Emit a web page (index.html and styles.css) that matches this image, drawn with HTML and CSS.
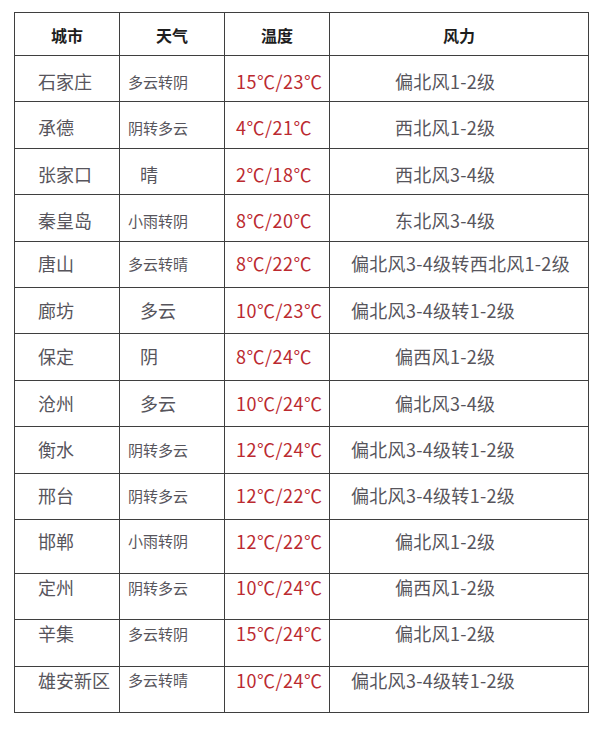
FILE: index.html
```html
<!DOCTYPE html>
<html lang="zh-CN">
<head>
<meta charset="utf-8">
<title>河北天气</title>
<link rel="stylesheet" href="styles.css">
</head>
<body>
<table class="wx">
  <colgroup>
    <col class="c-city"><col class="c-sky"><col class="c-temp"><col class="c-wind">
  </colgroup>
  <thead>
    <tr class="head"><th>城市</th><th>天气</th><th>温度</th><th>风力</th></tr>
  </thead>
  <tbody>
    <tr class="down"><td class="city">石家庄</td><td class="sky">多云转阴</td><td class="temp">15℃/23℃</td><td class="wind ind">偏北风1-2级</td></tr>
    <tr class="down"><td class="city">承德</td><td class="sky">阴转多云</td><td class="temp">4℃/21℃</td><td class="wind ind">西北风1-2级</td></tr>
    <tr class="down"><td class="city">张家口</td><td class="sky big">晴</td><td class="temp">2℃/18℃</td><td class="wind ind">西北风3-4级</td></tr>
    <tr class="down"><td class="city">秦皇岛</td><td class="sky">小雨转阴</td><td class="temp">8℃/20℃</td><td class="wind ind">东北风3-4级</td></tr>
    <tr><td class="city">唐山</td><td class="sky">多云转晴</td><td class="temp">8℃/22℃</td><td class="wind">偏北风3-4级转西北风1-2级</td></tr>
    <tr><td class="city">廊坊</td><td class="sky big">多云</td><td class="temp">10℃/23℃</td><td class="wind">偏北风3-4级转1-2级</td></tr>
    <tr><td class="city">保定</td><td class="sky big">阴</td><td class="temp">8℃/24℃</td><td class="wind ind">偏西风1-2级</td></tr>
    <tr><td class="city">沧州</td><td class="sky big">多云</td><td class="temp">10℃/24℃</td><td class="wind ind">偏北风3-4级</td></tr>
    <tr><td class="city">衡水</td><td class="sky">阴转多云</td><td class="temp">12℃/24℃</td><td class="wind">偏北风3-4级转1-2级</td></tr>
    <tr><td class="city">邢台</td><td class="sky">阴转多云</td><td class="temp">12℃/22℃</td><td class="wind">偏北风3-4级转1-2级</td></tr>
    <tr class="tall"><td class="city">邯郸</td><td class="sky">小雨转阴</td><td class="temp">12℃/22℃</td><td class="wind ind">偏北风1-2级</td></tr>
    <tr class="up"><td class="city">定州</td><td class="sky">阴转多云</td><td class="temp">10℃/24℃</td><td class="wind ind">偏西风1-2级</td></tr>
    <tr class="up"><td class="city">辛集</td><td class="sky">多云转阴</td><td class="temp">15℃/24℃</td><td class="wind ind">偏北风1-2级</td></tr>
    <tr class="up"><td class="city">雄安新区</td><td class="sky">多云转晴</td><td class="temp">10℃/24℃</td><td class="wind">偏北风3-4级转1-2级</td></tr>
  </tbody>
</table>
</body>
</html>
```

FILE: styles.css
```css
html, body {
  margin: 0;
  padding: 0;
  background: #ffffff;
}

body {
  padding: 12px 0 0 14px;
  font-family: "Noto Sans CJK SC", "Noto Sans", sans-serif;
  color: #57555c;
}

.wx {
  border-collapse: collapse;
  table-layout: fixed;
  width: 574px;
}

.c-city, .c-sky, .c-temp { width: 105px; }
.c-wind { width: 259px; }

.wx th, .wx td {
  box-sizing: border-box;
  border: 1px solid #3f3f3f;
  padding: 0;
  vertical-align: middle;
  white-space: nowrap;
  overflow: hidden;
  line-height: 1.2;
}

.head th {
  height: 43px;
  font-size: 16px;
  font-weight: 700;
  color: #1e1e1e;
  text-align: center;
  padding-top: 4px;
}

.wx tbody td {
  height: 46.4px;
  text-align: left;
}

.wx tbody tr.tall td {
  height: 54px;
  padding-bottom: 10px;
}

.wx tbody tr.up td {
  padding-bottom: 18px;
}

.wx tbody tr.down td {
  padding-top: 6px;
}

.city {
  font-size: 18px;
  padding-left: 23px !important;
}

.sky {
  font-size: 15px;
  padding-left: 8px !important;
}

.sky.big {
  font-size: 18px;
  padding-left: 20px !important;
}

.temp {
  font-size: 18px;
  letter-spacing: 0.5px;
  color: #bb2a30;
  padding-left: 11px !important;
}

.wind {
  font-size: 18px;
  letter-spacing: 0.3px;
  padding-left: 21px !important;
}

.wind.ind {
  padding-left: 65px !important;
}
```
